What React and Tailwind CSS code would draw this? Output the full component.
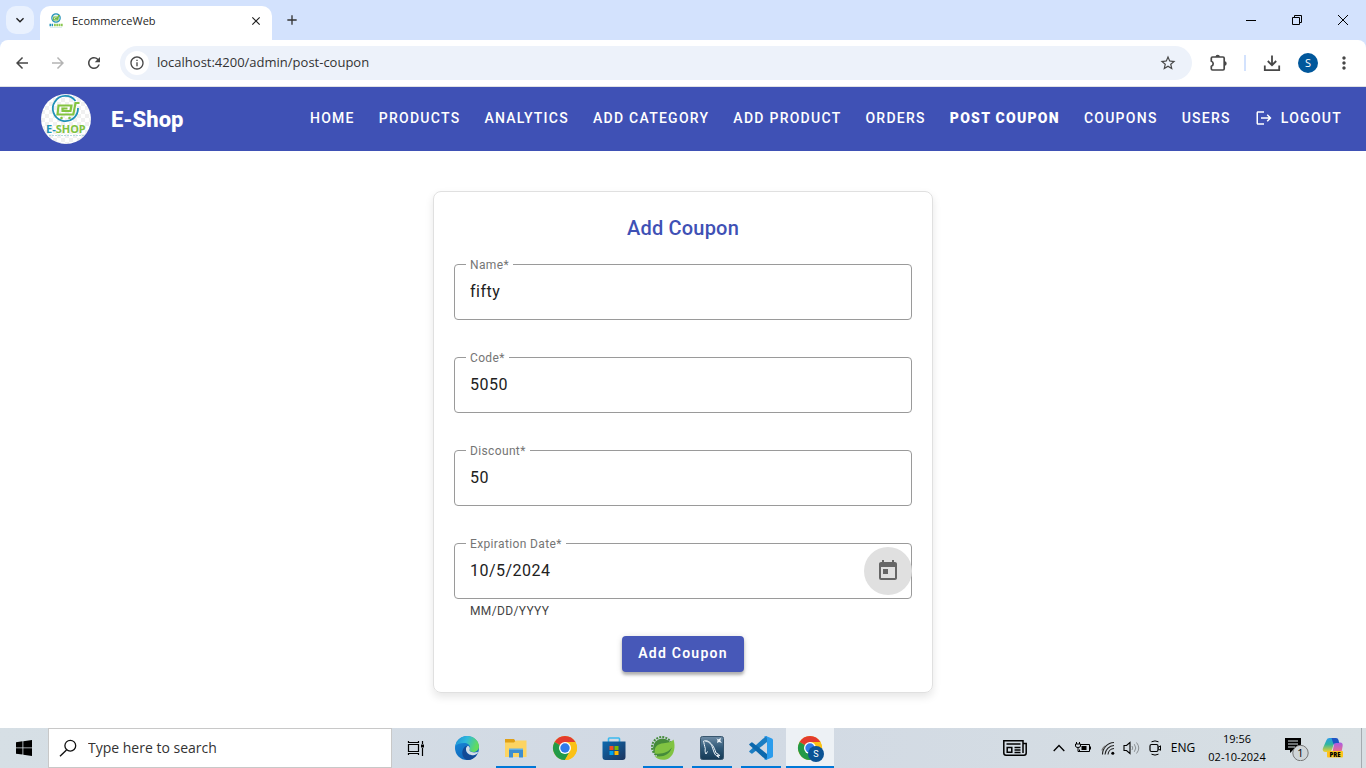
import React from "react";
import {
  MdArrowBack,
  MdArrowForward,
  MdRefresh,
  MdClose,
  MdAdd,
  MdKeyboardArrowDown,
  MdInfoOutline,
  MdStarBorder,
  MdMoreVert,
  MdLogout,
  MdToday,
} from "react-icons/md";

function ShopLogo({ className }) {
  return (
    <svg viewBox="0 0 50 50" className={className} aria-hidden="true">
      <defs>
        <pattern id="check" width="8" height="8" patternUnits="userSpaceOnUse">
          <rect width="8" height="8" fill="#ffffff" />
          <rect width="4" height="4" fill="#f0f0f0" />
          <rect x="4" y="4" width="4" height="4" fill="#f0f0f0" />
        </pattern>
        <clipPath id="round">
          <circle cx="25" cy="25" r="25" />
        </clipPath>
      </defs>
      <g clipPath="url(#round)">
        <rect width="50" height="50" fill="url(#check)" />
        <path d="M34.500 7A12.600 12.600 0 1 0 37 14" fill="none" stroke="#2191b8" strokeWidth="1.800" />
        <path
          d="M38.500 9h-4l-2.200 11.500H16.500l1-9h13l-1 5.500h-8v-2.500h5"
          fill="none"
          stroke="#84c441"
          strokeWidth="2.200"
        />
        <circle cx="20.500" cy="24" r="1.300" fill="#84c441" />
        <circle cx="28.500" cy="24" r="1.300" fill="#84c441" />
        <text x="5" y="39" fontSize="11" fontWeight="700" fontFamily="Noto Sans, sans-serif" fill="#1f96b4">
          E-<tspan fill="#7fc23e">SHOP</tspan>
        </text>
        <path d="M8 41.500h35" stroke="#b4d9df" strokeWidth="1" strokeDasharray="2 1" />
      </g>
    </svg>
  );
}

function TabFavicon() {
  return (
    <svg viewBox="0 0 16 16" className="mb-1 size-4 shrink-0" aria-hidden="true">
      <circle cx="8" cy="5" r="4.200" fill="#e8f3ee" stroke="#2191b8" strokeWidth="1.200" />
      <path d="M12 2.500h-1.500l-.7 4.300H5.500l.3-2.800h3.400v1.500H7" fill="none" stroke="#73b944" strokeWidth="1.200" />
      <path d="M1.500 12h4" stroke="#2191b8" strokeWidth="2.400" strokeDasharray="1.500 .6" />
      <path d="M6 12h9" stroke="#8cc852" strokeWidth="2.400" strokeDasharray="1.800 .5" />
      <path d="M2 14.500h12" stroke="#d4e8e8" strokeWidth=".8" />
    </svg>
  );
}

function PuzzleIcon() {
  return (
    <svg viewBox="0 0 20 20" className="size-5" aria-hidden="true">
      <path
        d="M4.500 4h10.500q1.200 0 1.200 1.200v10.600q0 1.200-1.200 1.200H4.500q-1.200 0-1.200-1.200v-2.600a2.600 2.600 0 0 0 0-5V5.200Q3.300 4 4.500 4z"
        fill="none"
        stroke="#474747"
        strokeWidth="1.700"
        strokeLinejoin="round"
      />
      <path d="M7.500 4a2.200 2.200 0 0 1 4.400 0zM16.500 8.300a2.200 2.200 0 0 1 0 4.400z" fill="#474747" />
    </svg>
  );
}

function ChromeTop() {
  return (
    <header className="shrink-0 bg-[#d3e2fd] font-['Open_Sans',sans-serif] text-[#1f1f1f]">
      <div className="flex h-10 items-stretch">
        <div className="flex w-10 items-center justify-center">
          <button type="button" aria-label="Search tabs" className="flex size-7 items-center justify-center rounded-[10px] bg-[#e9f1fe]">
            <MdKeyboardArrowDown className="size-4" />
          </button>
        </div>
        <div className="mt-1.5 flex w-58 items-center rounded-t-[10px] bg-white px-2">
          <TabFavicon />
          <span className="ml-2 flex-1 pb-1 text-[11px]">EcommerceWeb</span>
          <button type="button" aria-label="Close tab" className="mb-1 flex size-4 items-center justify-center">
            <MdClose className="size-3.5" />
          </button>
        </div>
        <button type="button" aria-label="New tab" className="flex w-10 items-center justify-center">
          <MdAdd className="size-4 text-[#333]" />
        </button>
        <div className="ml-auto flex">
          <button type="button" aria-label="Minimize" className="flex w-[46px] items-center justify-center">
            <svg viewBox="0 0 10 10" className="size-2.5"><path d="M0 5.500h10" stroke="#000" /></svg>
          </button>
          <button type="button" aria-label="Restore" className="flex w-[46px] items-center justify-center">
            <svg viewBox="0 0 10 10" className="size-2.5">
              <path d="M.5 2.500h7v7h-7zM2.500 2.500v-2h7v7h-2" fill="none" stroke="#000" />
            </svg>
          </button>
          <button type="button" aria-label="Close window" className="flex w-[46px] items-center justify-center">
            <svg viewBox="0 0 10 10" className="size-2.5"><path d="M0 0l10 10M10 0L0 10" stroke="#000" /></svg>
          </button>
        </div>
      </div>
      <div className="flex h-[47px] items-center rounded-t-lg border-b border-[#dfe1e5] bg-white pr-3 text-[#474747]">
        <button type="button" aria-label="Back" className="ml-3 flex size-5 items-center justify-center">
          <MdArrowBack className="size-[18px]" />
        </button>
        <button type="button" aria-label="Forward" className="ml-4 flex size-5 items-center justify-center text-[#b4b4b4]">
          <MdArrowForward className="size-[18px]" />
        </button>
        <button type="button" aria-label="Reload" className="ml-4 flex size-5 items-center justify-center">
          <MdRefresh className="size-[18px]" />
        </button>
        <div className="ml-4 flex h-[34px] flex-1 items-center rounded-full bg-[#edf2fa] pr-[15px] pl-[5px]">
          <button type="button" aria-label="Site information" className="flex size-6 items-center justify-center rounded-full bg-white">
            <MdInfoOutline className="size-4" />
          </button>
          <input
            aria-label="Address"
            defaultValue="localhost:4200/admin/post-coupon"
            className="ml-2 min-w-0 flex-1 bg-transparent text-[13px] text-[#333] outline-none"
          />
          <button type="button" aria-label="Bookmark this page">
            <MdStarBorder className="size-[18px]" />
          </button>
        </div>
        <button type="button" aria-label="Extensions" className="ml-4 flex size-5 items-center justify-center">
          <PuzzleIcon />
        </button>
        <span className="ml-4 h-4 w-0.5 bg-[#d3e2fd]" />
        <button type="button" aria-label="Downloads" className="ml-4 flex size-5 items-center justify-center">
          <svg viewBox="0 0 20 20" className="size-5">
            <path d="M10 2.500v9M5.800 8l4.200 4.200L14.200 8M2.800 12.500v4.700h14.400v-4.700" fill="none" stroke="#474747" strokeWidth="1.800" />
          </svg>
        </button>
        <button type="button" aria-label="Profile" className="ml-4 flex size-5 items-center justify-center rounded-full bg-[#01579b] text-[11px] text-white">
          S
        </button>
        <button type="button" aria-label="Menu" className="ml-4 flex size-5 items-center justify-center">
          <MdMoreVert className="size-5" />
        </button>
      </div>
    </header>
  );
}

const navItems = [
  "HOME",
  "PRODUCTS",
  "ANALYTICS",
  "ADD CATEGORY",
  "ADD PRODUCT",
  "ORDERS",
  "POST COUPON",
  "COUPONS",
  "USERS",
];

function ShopNav() {
  return (
    <nav className="flex h-16 shrink-0 items-center bg-[#3f51b5] pr-6 pl-[41px] text-white">
      <ShopLogo className="size-[50px] shrink-0" />
      <span className="ml-5 text-[22px] font-extrabold">E-Shop</span>
      <div className="ml-auto flex items-center gap-6 pb-0.5 text-sm font-medium tracking-[0.09em] whitespace-nowrap">
        {navItems.map((item) => (
          <a key={item} href="#" className={item === "POST COUPON" ? "font-black" : undefined}>
            {item}
          </a>
        ))}
        <a href="#" className="flex items-center gap-2">
          <MdLogout className="size-[18px]" />
          LOGOUT
        </a>
      </div>
    </nav>
  );
}

function Field({ id, label, value, hint, children }) {
  return (
    <div className="mb-[15px]">
      <div className="relative flex h-14 items-center rounded-sm border border-[#9a9a9a]">
        <label htmlFor={id} className="absolute -top-2 left-[11px] bg-white px-1 text-xs tracking-[0.03em] text-[#757575]">
          {label}*
        </label>
        <input
          id={id}
          defaultValue={value}
          className="h-full min-w-0 flex-1 bg-transparent px-[15px] pb-0.5 text-base tracking-[0.03em] text-[#212121] outline-none"
        />
        {children}
      </div>
      <p className="h-[22px] px-4 pt-1 text-xs tracking-[0.03em] text-[#444]">{hint}</p>
    </div>
  );
}

function CouponForm() {
  return (
    <main className="flex flex-1 justify-center bg-white pt-10 pb-[35px]">
      <form
        onSubmit={(e) => e.preventDefault()}
        className="flex w-full max-w-[500px] flex-col self-start rounded-lg border border-[#e0e0e0] p-5 shadow-[0_4px_8px_rgba(0,0,0,0.1)]"
      >
        <h1 className="mb-5 text-center text-xl leading-8 font-medium tracking-[0.01em] text-[#3f51b5]">Add Coupon</h1>
        <Field id="name" label="Name" value="fifty" />
        <Field id="code" label="Code" value="5050" />
        <Field id="discount" label="Discount" value="50" />
        <Field id="expiration" label="Expiration Date" value="10/5/2024" hint="MM/DD/YYYY">
          <button type="button" aria-label="Open calendar" className="-mr-px flex size-12 items-center justify-center rounded-full bg-[#e0e0e0] text-[#666]">
            <MdToday className="size-6" />
          </button>
        </Field>
        <button
          type="submit"
          className="h-9 self-center rounded-sm bg-[#4758b8] px-4 pb-0.5 text-sm font-semibold tracking-[0.09em] text-white shadow-[0_3px_3px_rgba(0,0,0,0.25),0_1px_6px_rgba(0,0,0,0.15)]"
        >
          Add Coupon
        </button>
      </form>
    </main>
  );
}

function ChromeMark() {
  return (
    <>
      <circle cx="12" cy="12" r="12" fill="#fbc116" />
      <path d="M12 12L1.600 6A12 12 0 0 1 22.400 6z" fill="#e33b2e" />
      <path d="M1.600 6A12 12 0 0 0 12 24l5-9-5-3z" fill="#229a48" />
      <path d="M12 6h10.400a12 12 0 0 1-10.400 18l5.200-9z" fill="#fbc116" />
      <circle cx="12" cy="12" r="6" fill="#fff" />
      <circle cx="12" cy="12" r="4.700" fill="#2f7bea" />
    </>
  );
}

const apps = [
  {
    name: "Edge",
    art: (
      <>
        <defs>
          <linearGradient id="edgeTop" x1="0" y1="0" x2="1" y2=".3">
            <stop offset="0" stopColor="#1d8fd6" />
            <stop offset=".5" stopColor="#2fb9dc" />
            <stop offset="1" stopColor="#62dc5c" />
          </linearGradient>
          <linearGradient id="edgeLeft" x1="0" y1="0" x2=".6" y2="1">
            <stop offset="0" stopColor="#1b8ee0" />
            <stop offset="1" stopColor="#0c62b4" />
          </linearGradient>
        </defs>
        <circle cx="12" cy="12" r="12" fill="url(#edgeLeft)" />
        <path d="M.3 10.200C1.600 4 6.400 0 12 0c7 0 12 5 12 10.500 0 3.600-2.700 5.500-5.800 5.500-2.600 0-4-1-4-1.900 0-.6.900-1 .9-2.500C15 9 12.500 7 9 7 5.500 7 1.800 8.200.3 10.200z" fill="url(#edgeTop)" />
        <path d="M7.300 17c0-4.700 3-7.500 5.700-7.300-1.300.8-2 2.300-2 4 0 3.500 3.500 6 7.500 5.500 1.500-.2 2.700-.7 3.700-1.300C20 22 16.500 24 12.500 24 9.500 23.300 7.300 20.500 7.300 17z" fill="#124a96" />
        <path d="M13 9.700c-1.500.8-2.200 2.300-2 4 .3 3.300 3.500 5.500 7.500 5.500 1.500-.2 3-.8 4-1.700l.5-1.800c-2 .8-4.500 1-6.500.3-2-.7-2.300-1.700-2-2.500.8-1.500.1-3-1.500-3.800z" fill="#d3dde7" />
      </>
    ),
  },
  {
    name: "File Explorer",
    open: true,
    art: (
      <>
        <path d="M1 3h9l2 3v4H1z" fill="#e0a016" />
        <path d="M1 6.500h9L12 4.500h10.500V21H1z" fill="#fcd462" />
        <path d="M5 13h14v8.500h-4v-4.500H9v4.500H5z" fill="#3c8ed0" />
        <path d="M5 12.500h14v1.500H5z" fill="#62b1e8" />
      </>
    ),
  },
  { name: "Chrome", art: <ChromeMark /> },
  {
    name: "Microsoft Store",
    art: (
      <>
        <defs>
          <linearGradient id="bag" x1="0" y1="0" x2="1" y2="1">
            <stop offset="0" stopColor="#0c6ab0" />
            <stop offset="1" stopColor="#1d355e" />
          </linearGradient>
        </defs>
        <path d="M6.500 6V2.800Q6.500 2 7.300 2h9.400q.8 0 .8.800V6" fill="none" stroke="#3bb9ee" strokeWidth="1.600" />
        <path d="M.5 5.500h23V21a3 3 0 0 1-3 3h-17a3 3 0 0 1-3-3z" fill="url(#bag)" />
        <path d="M7.500 10h4v4h-4z" fill="#f25022" />
        <path d="M12.500 10h4v4h-4z" fill="#7fba00" />
        <path d="M7.500 15h4v4h-4z" fill="#00a4ef" />
        <path d="M12.500 15h4v4h-4z" fill="#ffb900" />
      </>
    ),
  },
  {
    name: "Spring Tool Suite",
    open: true,
    art: (
      <>
        <circle cx="11" cy="11" r="10" fill="none" stroke="#458b3a" strokeWidth="2" strokeDasharray="2 1.140" />
        <circle cx="11.500" cy="12" r="9.500" fill="#458b3a" />
        <path d="M22.500 3.500c2.200 7 1 15-4.500 18.700-5 3-12 1.500-14.500-2.200 8 1.800 15-1.200 17.500-8.500-3.500 4.500-9.500 7-17 6-1.300-6.500 2.500-9.800 8.500-10.300 4.500-.3 8-1 10-3.700z" fill="#80c342" />
      </>
    ),
  },
  {
    name: "MySQL Workbench",
    open: true,
    art: (
      <>
        <defs>
          <linearGradient id="sql" x1="0" y1="0" x2="0" y2="1">
            <stop offset="0" stopColor="#6d8ba5" />
            <stop offset=".5" stopColor="#2f5877" />
            <stop offset="1" stopColor="#153a56" />
          </linearGradient>
        </defs>
        <rect x=".5" y=".5" width="23" height="23" rx="2" fill="url(#sql)" stroke="#38566e" />
        <path d="M7.500 15.500L6 18c-1-1.500-1-3.500-.7-5.500C4.500 10 4 7 3.500 5.200c3-1.500 5.500.3 7.500 2.300 3 3 4 6.500 5 9.500 1.500.5 3 1.500 4 2.700l-3-.7 2 2.500-3.500-2.500c-2-3-2-5-3.500-8.500C11 7.500 8 5 5.500 5.500" fill="none" stroke="#eef5fa" strokeWidth="1" />
        <path d="M16.500 2l1.500 1.500L21 2l-.7 2.700L22 7l-3-1-2 1 .5-2.500z" fill="#eef5fa" />
      </>
    ),
  },
  {
    name: "Visual Studio Code",
    open: true,
    art: (
      <>
        <path d="M18 6L3.400 17.600q-.5.400-1 0L.4 16q-.5-.5 0-1L16.500.5 18 0z" fill="#1b7dc2" />
        <path d="M18 18L3.400 6.400q-.5-.4-1 0L.4 8q-.5.500 0 1L16.500 23.500 18 24z" fill="#0b68ad" />
        <path d="M17 0l6 2.500q1 .5 1 1.500v16q0 1-1 1.500L17 24q-1.300.3-2-1 3 1 3-1.500v-19Q18 .3 15 1q.7-1.300 2-1z" fill="#2b9cec" />
      </>
    ),
  },
  {
    name: "Chrome, profile S",
    open: true,
    active: true,
    art: (
      <>
        <ChromeMark />
        <circle cx="18" cy="18" r="8" fill="#0b5394" />
        <text x="18" y="21" fontSize="9" textAnchor="middle" fontFamily="Roboto, sans-serif" fill="#fff">S</text>
      </>
    ),
  },
];

function TrayButton({ label, className, children }) {
  return (
    <button type="button" aria-label={label} className={"flex h-full items-center " + className}>
      {children}
    </button>
  );
}

function Taskbar() {
  return (
    <footer className="flex h-10 shrink-0 items-center bg-linear-to-r from-[#d6dfe5] via-[#d1d9e4] to-[#d7dfe3] font-['Open_Sans',sans-serif] text-black">
      <TrayButton label="Start" className="w-12 justify-center">
        <svg viewBox="0 0 16 16" className="size-4">
          <path d="M0 2.200L6.500 1.300v6.200H0zM7.300 1.200L16 0v7.500H7.300zM0 8.300h6.500v6.300L0 13.700zM7.300 8.300H16V16l-8.700-1.200z" />
        </svg>
      </TrayButton>
      <div className="flex h-full w-86 items-center border border-[#c8c8c8] bg-white pl-2.5">
        <svg viewBox="0 0 18 18" className="size-[18px] shrink-0">
          <path d="M7.500 11L1 17.300" stroke="#111" strokeWidth="1.400" />
          <circle cx="11.300" cy="6.700" r="5.400" fill="none" stroke="#111" strokeWidth="1.300" />
        </svg>
        <input
          aria-label="Type here to search"
          placeholder="Type here to search"
          className="ml-[11px] min-w-0 flex-1 bg-transparent text-sm outline-none placeholder:text-[#333]"
        />
      </div>
      <TrayButton label="Task view" className="w-12 justify-center">
        <svg viewBox="0 0 18 16" className="h-4 w-[18px]">
          <path d="M1.500 4.500h10v7h-10zM1.500 1v1.500h10V1M1.500 15v-1.500h10V15M15.500 1v3M15.500 8v8" fill="none" stroke="#000" strokeWidth="1.200" />
          <path d="M14 4.500h3v3h-3z" />
        </svg>
      </TrayButton>
      <div className="ml-[3px] flex h-full gap-px">
        {apps.map((app) => (
          <button
            key={app.name}
            type="button"
            aria-label={app.name}
            className={"relative flex h-full w-12 items-center justify-center " + (app.active ? "bg-[#edf1f5]" : "")}
          >
            <svg viewBox="-1 -1 27 27" className="size-[27px]">{app.art}</svg>
            {app.open && (
              <span className={"absolute bottom-0 h-0.5 bg-[#0078d7] " + (app.active ? "inset-x-0" : "inset-x-1")} />
            )}
          </button>
        ))}
      </div>
      <div className="ml-auto flex h-full items-center text-xs">
        <TrayButton label="News" className="mr-2 w-12 justify-center">
          <svg viewBox="0 0 24 16" className="h-4 w-6" fill="none" stroke="#000" strokeWidth="1.500">
            <path d="M20 13V.8H.8V13q0 2.200 2.200 2.200h18q2.200 0 2.200-2.200V3.500H20V13" />
            <path d="M3.500 4h14M11.500 7.500h6M11.500 10h6M11.500 12.500h6M4.200 7.500h4.600v4.700H4.200z" />
          </svg>
        </TrayButton>
        <TrayButton label="Show hidden icons" className="w-6 justify-center">
          <svg viewBox="0 0 12 8" className="h-2 w-3"><path d="M.7 7L6 1.500 11.300 7" fill="none" stroke="#000" strokeWidth="1.300" /></svg>
        </TrayButton>
        <TrayButton label="Battery" className="w-6 justify-center">
          <svg viewBox="0 0 16 12" className="h-3 w-4">
            <path d="M5.500 2.500h9v7h-10V7.500" fill="none" stroke="#000" strokeWidth="1" />
            <path d="M6.500 4h5v4h-5V6zM14.500 4.500H16v3h-1.500zM1 0h1v2H1zM4 0h1v2H4z" />
            <path d="M.5 2h5v2Q5.500 5.500 3 5.500T.5 4zM3 5.500v4h2" fill="none" stroke="#000" />
          </svg>
        </TrayButton>
        <TrayButton label="Network" className="w-[26px] justify-center">
          <svg viewBox="0 0 14 14" className="size-3.5" fill="none" stroke="#222" strokeWidth="1.100">
            <path d="M4 13.500A9.500 9.500 0 0 1 13 4.500M7 13.500A6.500 6.500 0 0 1 13 7.500" />
            <path d="M1.500 13.500A12 12 0 0 1 13 1.500" />
            <path d="M.8 9.500A12 12 0 0 1 4 5" stroke="#777" />
            <circle cx="11.800" cy="12.200" r="1.500" fill="#000" stroke="none" />
          </svg>
        </TrayButton>
        <TrayButton label="Volume" className="w-5 justify-center">
          <svg viewBox="0 0 17 14" className="h-3.5 w-[17px]" fill="none" stroke="#000">
            <path d="M1 4.500h2.500L7 1.500v11L3.500 9.500H1z" strokeWidth="1.100" />
            <path d="M9 5q1.500 2 0 4M11.300 3.200q3 3.800 0 7.600M13.500 1.500q4.500 5.500 0 11" stroke="#8a8f92" />
          </svg>
        </TrayButton>
        <TrayButton label="Meet now" className="w-7 justify-center">
          <svg viewBox="0 0 13 16" className="h-4 w-[13px]" fill="none" stroke="#000">
            <rect x="1" y="4.500" width="8" height="7" rx="1.500" strokeWidth="1.200" />
            <path d="M9 7.500l2.500-1.700v4.500L9 8.800M2.500 1.800q3.500-1.800 7 0M2.500 14.200q3.500 1.800 7 0" />
          </svg>
        </TrayButton>
        <TrayButton label="Language" className="w-7 justify-center">ENG</TrayButton>
        <TrayButton label="Clock" className="w-20 flex-col justify-center text-[11px] leading-[18px]">
          <span>19:56</span>
          <span>02-10-2024</span>
        </TrayButton>
        <TrayButton label="Notifications" className="w-9 justify-end pr-1">
          <svg viewBox="0 0 24 26" className="h-[26px] w-6">
            <path d="M0 3h16v12H8l-3 3v-3H0z" />
            <path d="M3 6h10M3 9h10M3 12h7" stroke="#d7dfe3" />
            <circle cx="15.500" cy="18" r="7.700" fill="#cfd5d8" stroke="#777" />
            <text x="15.500" y="22" fontSize="11" textAnchor="middle" fontFamily="Open Sans, sans-serif">1</text>
          </svg>
        </TrayButton>
        <TrayButton label="Copilot" className="w-12 justify-center pr-2">
          <svg viewBox="0 0 22 22" className="size-[22px]">
            <defs>
              <linearGradient id="copA" x1="0" y1="0" x2="0" y2="1">
                <stop offset="0" stopColor="#2b9be8" />
                <stop offset=".45" stopColor="#2fb6a0" />
                <stop offset="1" stopColor="#f5d02a" />
              </linearGradient>
              <linearGradient id="copB" x1="0" y1="0" x2="0" y2="1">
                <stop offset="0" stopColor="#a95be6" />
                <stop offset="1" stopColor="#f26f83" />
              </linearGradient>
            </defs>
            <path d="M14 5.500h4q3.300.3 2.600 3.700L19.500 15h-9l1.500-7.500q.5-2 2-2z" fill="url(#copB)" />
            <path d="M4.500 3Q5.200 1 7.500 1H13l-1 5-2 6.500q-.8 2.500-3 2.500H3Q-.2 14.500 1 11z" fill="url(#copA)" />
            <path d="M9.500 1H14q2 0 2.500 2l.7 3H14q-1.700 0-2.300 1.800z" fill="#1f55c4" />
            <rect x="5" y="14" width="16" height="6.500" rx="1" fill="#fdc41c" />
            <text x="13" y="19.500" fontSize="6" fontWeight="800" textAnchor="middle" fontFamily="Open Sans, sans-serif">PRE</text>
          </svg>
        </TrayButton>
        <button type="button" aria-label="Show desktop" className="h-full w-[5px] border-l border-[#a5abb0]" />
      </div>
    </footer>
  );
}

export default function App() {
  return (
    <div className="flex min-h-screen flex-col bg-white font-[Roboto,sans-serif]">
      <ChromeTop />
      <ShopNav />
      <CouponForm />
      <Taskbar />
    </div>
  );
}
